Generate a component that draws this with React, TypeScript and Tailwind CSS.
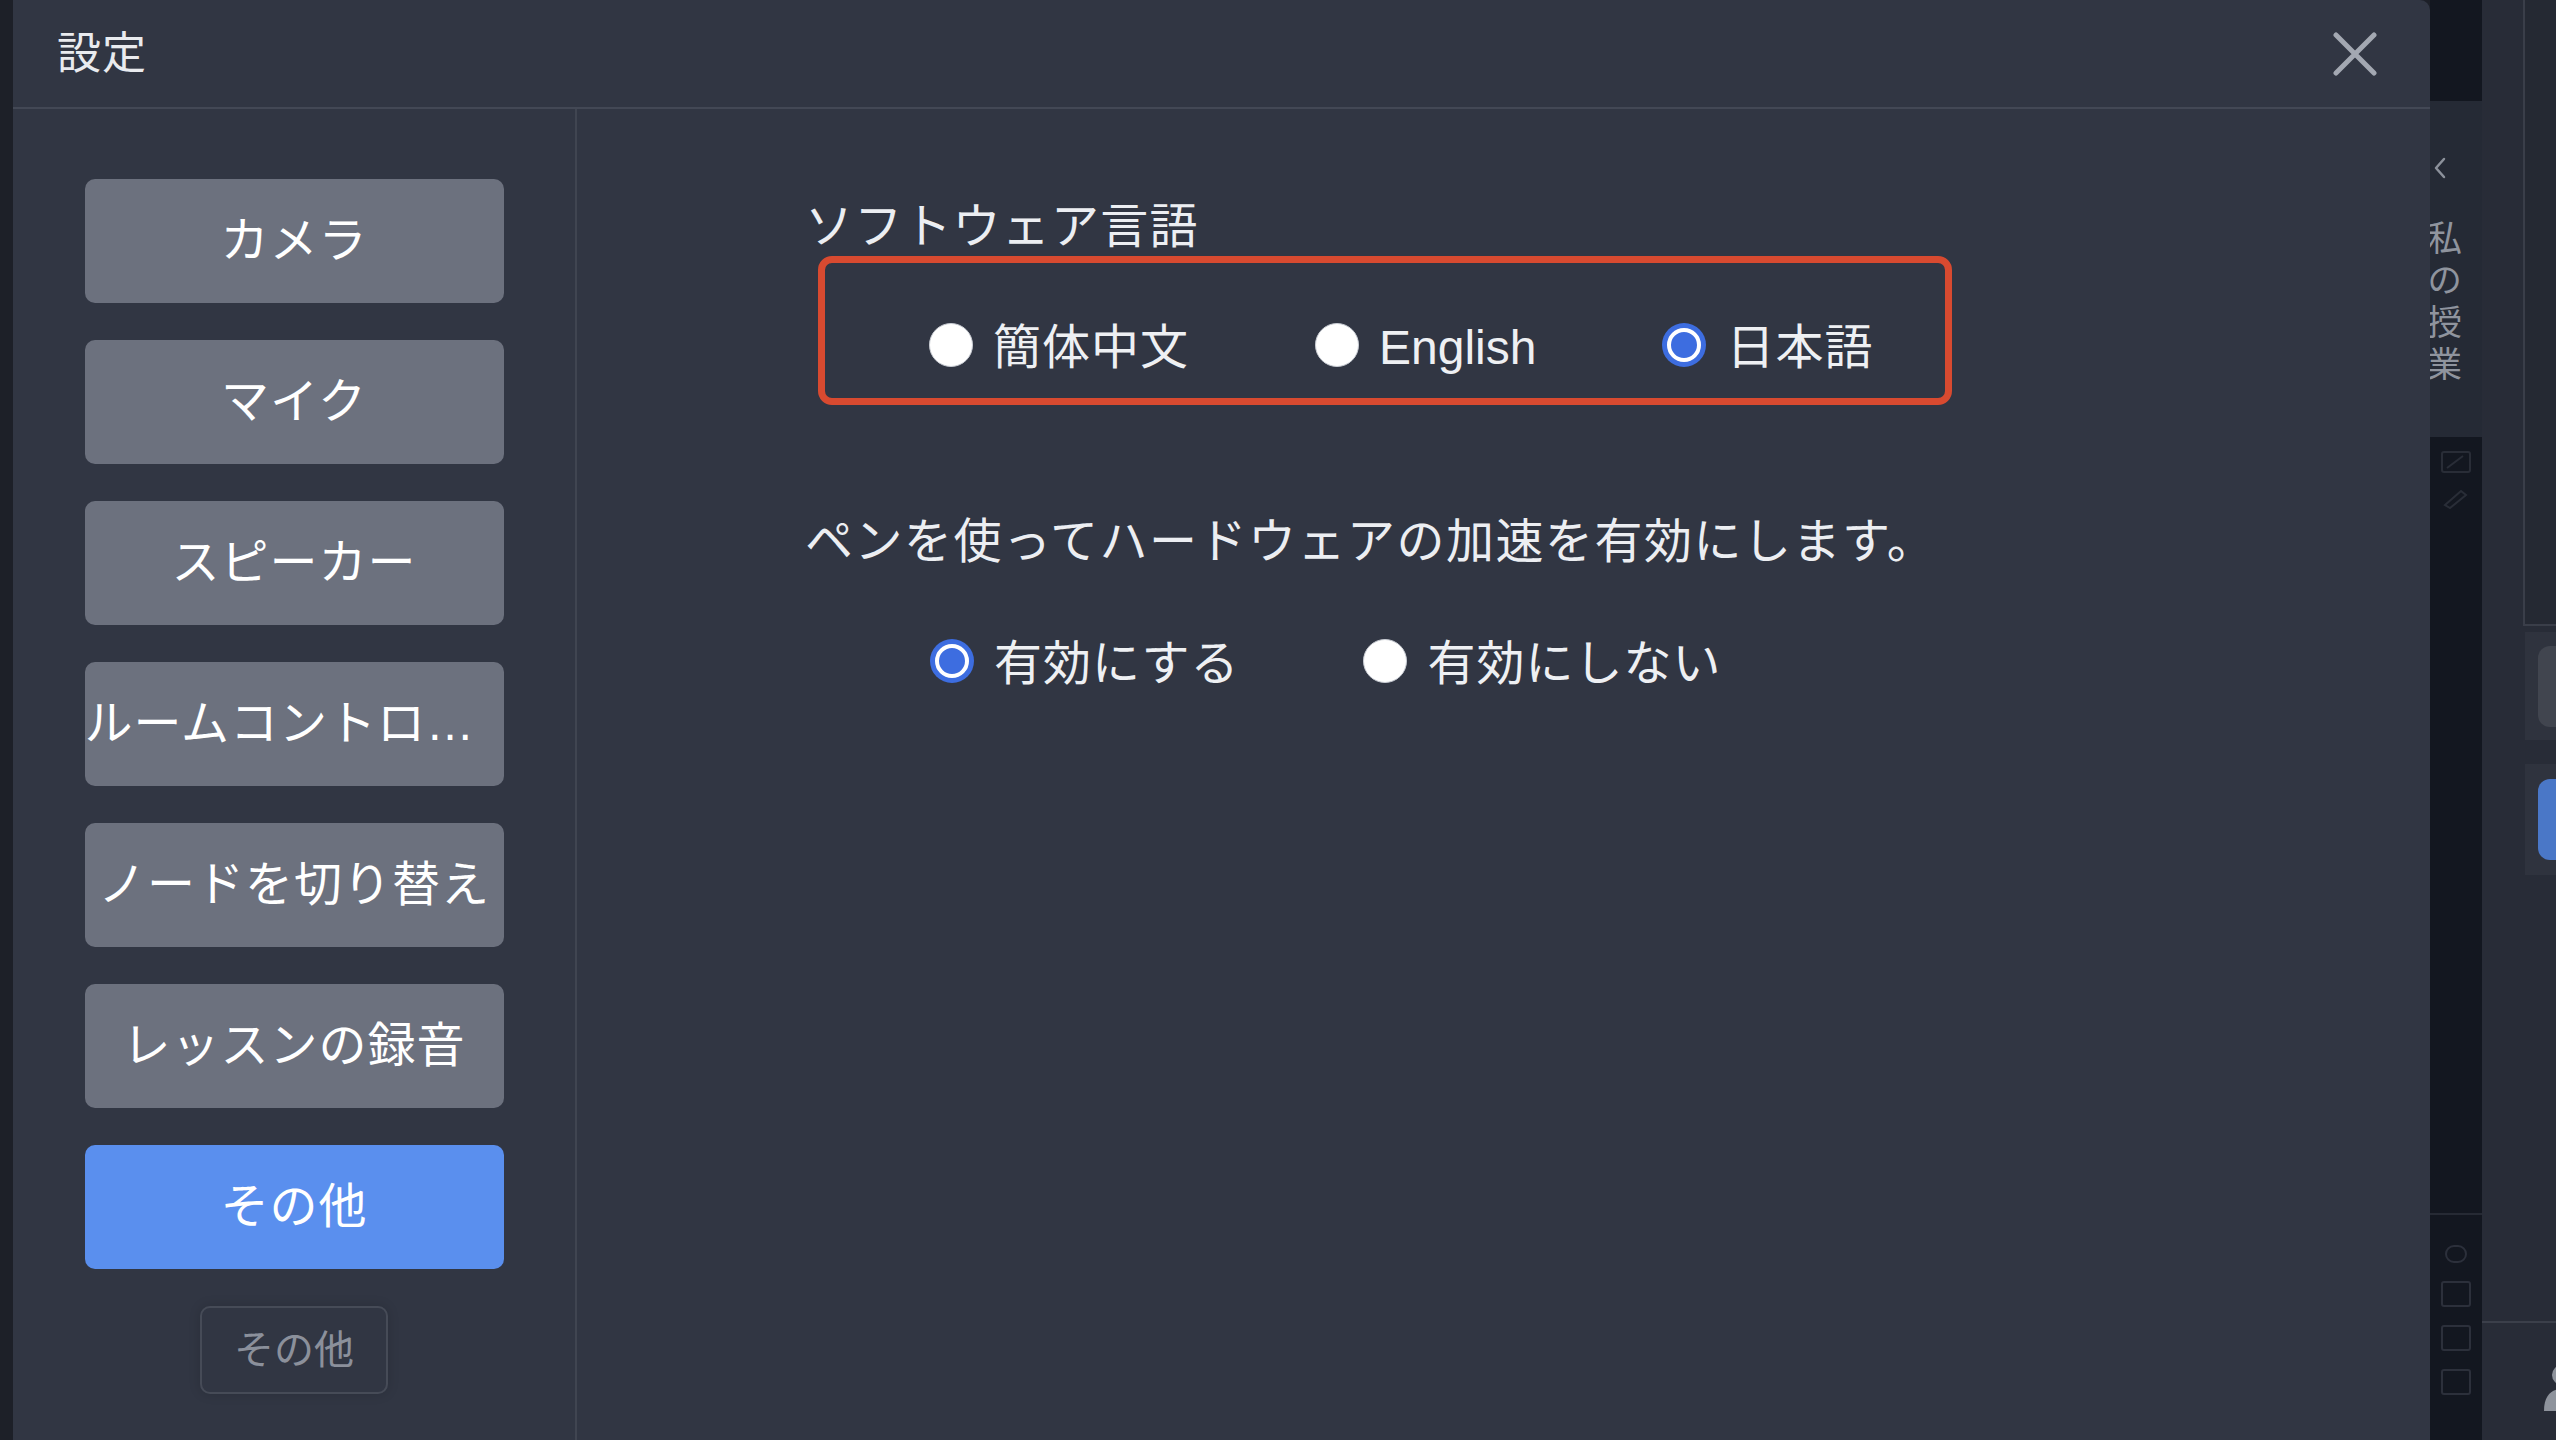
import { ReactNode } from 'react';

const FONT = "font-['Liberation_Sans','Noto_Sans_CJK_JP',sans-serif]";

const menuItems = [
  'カメラ',
  'マイク',
  'スピーカー',
  'ルームコントロール',
  'ノードを切り替え',
  'レッスンの録音',
];

function Radio({ checked }: { checked?: boolean }) {
  if (checked) {
    return (
      <div className="w-[44px] h-[44px] shrink-0 rounded-full bg-[#3d6de0] p-[5px]">
        <div className="w-full h-full rounded-full border-[4px] border-white" />
      </div>
    );
  }
  return <div className="w-[44px] h-[44px] shrink-0 rounded-full bg-white border border-[#c9cdd4]" />;
}

function Option({ checked, latin, children }: { checked?: boolean; latin?: boolean; children: ReactNode }) {
  return (
    <label className="flex items-center gap-[20px] h-[48px]">
      <Radio checked={checked} />
      <span
        className={`pt-[5px] text-[48px] leading-[48px] text-[#eef0f3] whitespace-nowrap ${latin ? 'tracking-normal' : 'tracking-[1px]'}`}
      >
        {children}
      </span>
    </label>
  );
}

function SideRail() {
  return (
    <div className="w-[52px] h-full flex flex-col bg-[#131720]">
      <div className="h-[101px]" />
      <div className="h-[336px] bg-[#252a35] flex flex-col items-start">
        <svg className="mt-[55px] ml-[2px]" width="16" height="24" viewBox="0 0 16 24" fill="none" stroke="#8c919b" strokeWidth="2.5" strokeLinecap="round" strokeLinejoin="round">
          <path d="M12 3 L4 12 L12 21" />
        </svg>
        <div className="mt-[40px] -ml-[4px] w-[36px] [writing-mode:vertical-rl] text-[35px] leading-[36px] tracking-[7px] text-[#8f949e] font-['Noto_Sans_CJK_JP',sans-serif]">
          私の授業
        </div>
      </div>
      <div className="h-[85px] flex flex-col items-center justify-center gap-[14px] opacity-40">
        <svg width="30" height="22" viewBox="0 0 30 22" fill="none" stroke="#4a4f5a" strokeWidth="2">
          <rect x="1" y="1" width="28" height="20" rx="2" />
          <path d="M6 17 L22 5" />
        </svg>
        <svg width="30" height="22" viewBox="0 0 30 22" fill="none" stroke="#4a4f5a" strokeWidth="2">
          <path d="M4 18 L20 4 L25 8 L9 21 Z" />
        </svg>
      </div>
      <div className="flex-1 border-b-2 border-[#262a34]" />
      <div className="h-[225px] flex flex-col items-center pt-[30px] gap-[18px]">
        <div className="w-[22px] h-[18px] rounded-full border-2 border-[#2c303b]" />
        <div className="w-[30px] h-[26px] rounded-[3px] border-2 border-[#2c303b]" />
        <div className="w-[30px] h-[26px] rounded-[3px] border-2 border-[#2c303b]" />
        <div className="w-[30px] h-[26px] rounded-[3px] border-2 border-[#2c303b]" />
      </div>
    </div>
  );
}

function RightPanel() {
  return (
    <div className="w-[74px] h-full flex flex-col bg-[#282c37]">
      <div className="h-[626px] ml-[41px] border-l-2 border-b-2 border-[#3a3e49] bg-[#252933]" />
      <div className="mt-[6px] ml-[43px] h-[108px] bg-[#2f333e] flex items-center pl-[13px]">
        <div className="w-[40px] h-[81px] rounded-l-[12px] bg-[#41454f]" />
      </div>
      <div className="mt-[24px] ml-[43px] h-[111px] bg-[#2f333e] flex items-center pl-[13px]">
        <div className="w-[40px] h-[81px] rounded-l-[12px] bg-[#4a77c7]" />
      </div>
      <div className="mt-[446px] border-t-2 border-[#3b3f4a] flex-1 pl-[58px] pt-[40px]">
        <svg width="30" height="50" viewBox="0 0 30 50" fill="#8e939c">
          <circle cx="22" cy="12" r="10" />
          <path d="M4 48 C4 32 12 26 22 26 C30 26 30 30 30 30 L30 48 Z" />
        </svg>
      </div>
    </div>
  );
}

export default function App() {
  return (
    <div className={`relative w-[2556px] h-[1440px] overflow-hidden bg-[#1d2028] ${FONT}`}>
      <div className="flex h-full">
        <div className="flex-1" />
        <SideRail />
        <RightPanel />
      </div>

      {/* settings dialog */}
      <div className="absolute left-[13px] top-0 w-[2417px] h-[1480px] rounded-tr-[10px] bg-[#313643] flex flex-col">
        <div className="h-[109px] shrink-0 flex items-center justify-between border-b-2 border-[#434855] pl-[44px] pr-[53px]">
          <span className="text-[44px] leading-[44px] tracking-[1px] text-[#e9ebef]">設定</span>
          <svg width="44" height="44" viewBox="0 0 44 44" stroke="#a3a8b2" strokeWidth="5" strokeLinecap="round">
            <path d="M3 3 L41 41 M41 3 L3 41" />
          </svg>
        </div>

        <div className="flex flex-1">
          <div className="w-[564px] shrink-0 border-r-2 border-[#404551] flex flex-col items-center pt-[70px] gap-[37px]">
            {menuItems.map((item) => (
              <button
                key={item}
                className="w-[419px] h-[124px] rounded-[10px] bg-[#6c717e] text-white text-[48px] leading-[124px] tracking-[1px] text-center whitespace-nowrap overflow-hidden text-ellipsis"
              >
                {item}
              </button>
            ))}
            <button className="w-[419px] h-[124px] rounded-[10px] bg-[#5a8fee] text-white text-[48px] leading-[124px] tracking-[1px] text-center">
              その他
            </button>
            <button className="w-[188px] h-[88px] rounded-[10px] border-2 border-[#464b57] text-[#8b909b] text-[40px] leading-[84px] text-center shadow-[0_0_12px_rgba(0,0,0,0.15)]">
              その他
            </button>
          </div>

          <div className="flex-1 pl-[228px] pt-[94px] flex flex-col items-start">
            <div className="text-[48px] leading-[48px] tracking-[1.2px] text-[#eceef2]">ソフトウェア言語</div>
            <div className="mt-[5px] ml-[13px] h-[149px] w-[1134px] rounded-[14px] border-[7px] border-[#d84a30] flex items-start pl-[104px] pt-[58px] gap-[126px]">
              <Option>簡体中文</Option>
              <Option latin>English</Option>
              <Option checked>日本語</Option>
            </div>

            <div className="mt-[113px] text-[48px] leading-[48px] tracking-[1.5px] text-[#eceef2] whitespace-nowrap">
              ペンを使ってハードウェアの加速を有効にします。
            </div>
            <div className="mt-[71px] ml-[125px] flex items-center gap-[124px]">
              <Option checked>有効にする</Option>
              <Option>有効にしない</Option>
            </div>
          </div>
        </div>
      </div>
    </div>
  );
}
